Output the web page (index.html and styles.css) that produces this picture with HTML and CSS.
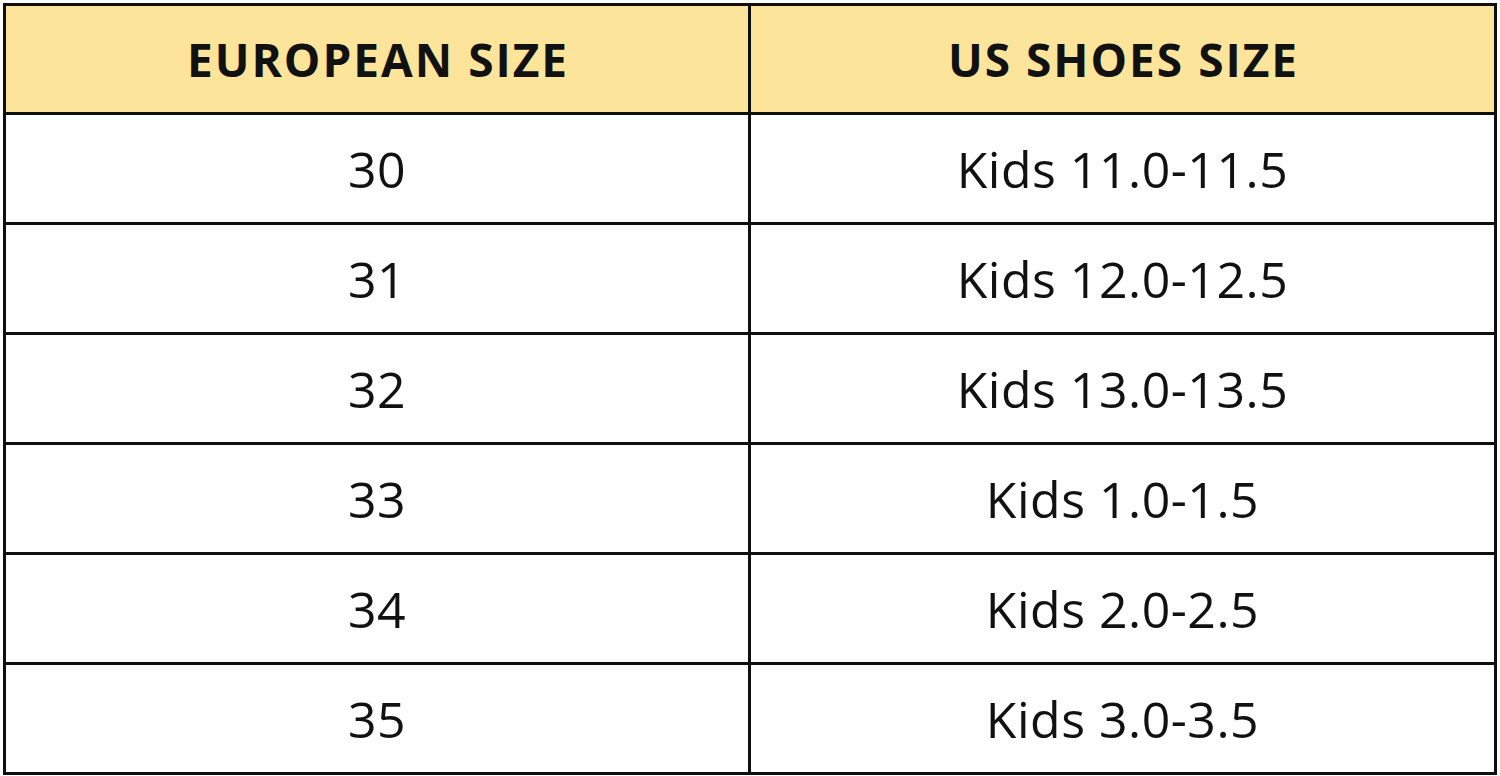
FILE: index.html
```html
<!DOCTYPE html>
<html>
<head>
<meta charset="utf-8">
<link rel="stylesheet" href="styles.css">
</head>
<body>
<div class="chart">
  <div class="cell head">EUROPEAN SIZE</div>
  <div class="cell head">US SHOES SIZE</div>
  <div class="cell">30</div><div class="cell">Kids 11.0-11.5</div>
  <div class="cell">31</div><div class="cell">Kids 12.0-12.5</div>
  <div class="cell">32</div><div class="cell">Kids 13.0-13.5</div>
  <div class="cell">33</div><div class="cell">Kids 1.0-1.5</div>
  <div class="cell">34</div><div class="cell">Kids 2.0-2.5</div>
  <div class="cell">35</div><div class="cell">Kids 3.0-3.5</div>
</div>
</body>
</html>
```
FILE: styles.css
```css
html, body {
  margin: 0;
  padding: 0;
  background: #ffffff;
}
body {
  padding: 3px 0 0 3px;
  font-family: "Open Sans", "Liberation Sans", sans-serif;
}
.chart {
  display: grid;
  grid-template-columns: 742px 743px;
  grid-template-rows: 106px repeat(6, 107px);
  gap: 3px;
  padding: 3px;
  width: max-content;
  background: #0f0f0f;
}
.cell {
  background: #fefefe;
  display: flex;
  align-items: center;
  justify-content: center;
  font-size: 50px;
  letter-spacing: 0.5px;
  color: #111;
}
.head {
  background: #fde49b;
  font-weight: 700;
  font-size: 46px;
  letter-spacing: 2px;
  padding-left: 2px;
}
```
